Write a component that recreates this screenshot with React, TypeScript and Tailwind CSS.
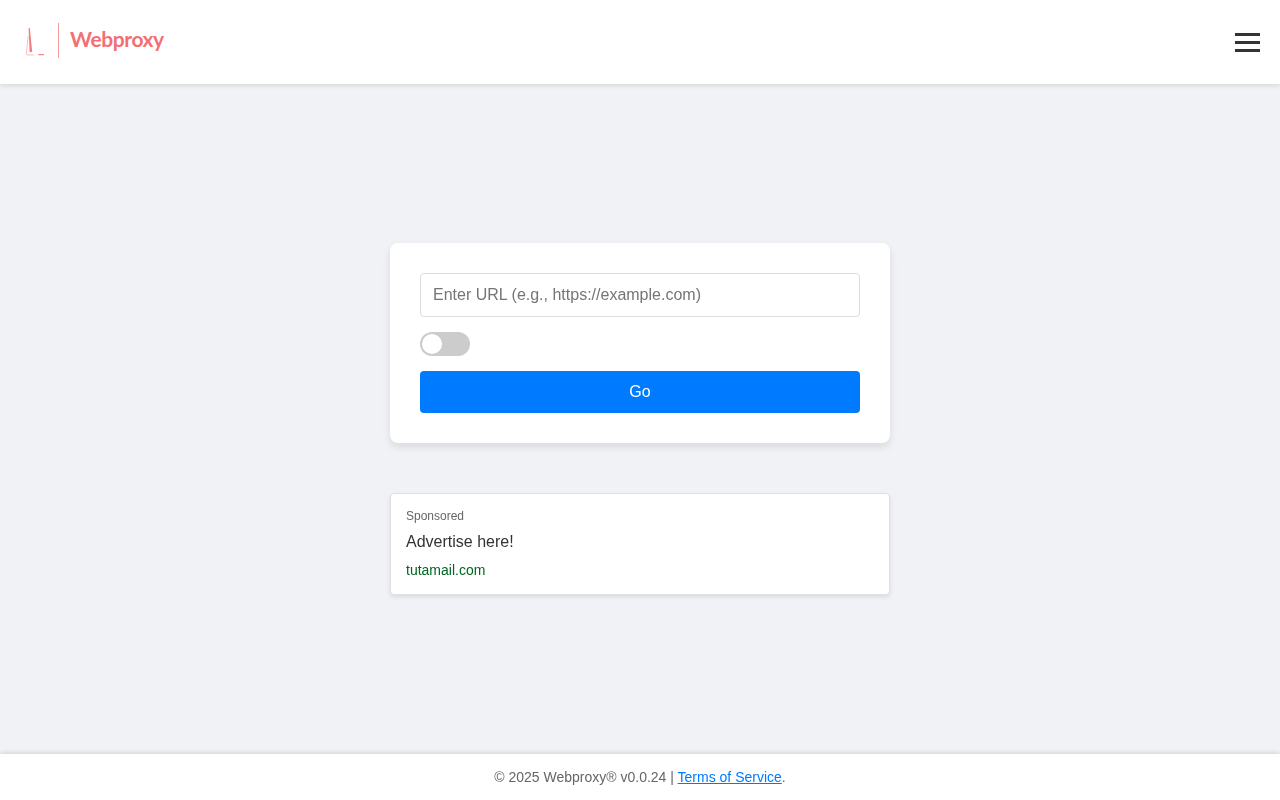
export default function App() {
  return (
    <div className="flex h-[800px] flex-col overflow-hidden bg-[#f0f2f5] font-['Liberation_Sans',Arial,sans-serif] text-[#333]">
      <header className="relative z-10 flex h-[84px] shrink-0 items-center justify-between bg-white pl-5 pr-5 shadow-[0_2px_4px_rgba(0,0,0,0.1)]">
        <div className="-mt-1 flex items-center">
          <svg width="26" height="36" viewBox="0 0 26 36" className="mr-3" fill="none">
            <path d="M8.6 6 L9.8 6 L12.2 30 L9.6 30 Z" fill="#f47c80" />
            <path d="M8.2 14 L6.3 32 L7 33 H14" stroke="#f9aeb0" strokeWidth="0.8" />
            <path d="M18.3 32.6 H24" stroke="#f4858a" strokeWidth="1.3" />
          </svg>
          <div className="mr-[11px] h-[35px] w-px bg-[#f59a9d]" />
          <span className="-mt-1 font-['Lato',sans-serif] text-[21px] font-bold leading-none tracking-[-0.4px] text-[#f26f73]">Webproxy</span>
        </div>
        <button className="flex w-[25px] flex-col gap-[5px]" aria-label="Menu">
          <span className="h-[3px] w-[25px] bg-[#333]" />
          <span className="h-[3px] w-[25px] bg-[#333]" />
          <span className="h-[3px] w-[25px] bg-[#333]" />
        </button>
      </header>

      <main className="flex flex-1 flex-col items-center justify-center gap-[50px]">
        <div className="flex w-[500px] flex-col rounded-lg bg-white p-[30px] shadow-[0_4px_8px_rgba(0,0,0,0.1)] will-change-transform">
          <input
            type="text"
            placeholder="Enter URL (e.g., https://example.com)"
            className="h-[44px] w-full rounded border border-[#ddd] px-3 text-base outline-none placeholder:text-[#757575]"
          />
          <div className="relative mt-[15px] h-6 w-[50px] rounded-full bg-[#ccc]">
            <div className="absolute left-[2px] top-[2px] h-5 w-5 rounded-full bg-white" />
          </div>
          <button className="mt-[15px] h-[42px] w-full rounded bg-[#007bff] text-base text-white">Go</button>
        </div>

        <div className="flex h-[102px] w-[500px] flex-col rounded border border-[#e0e0e0] bg-white px-[15px] pt-[15px] shadow-[0_2px_4px_rgba(0,0,0,0.1)] will-change-transform">
          <div className="text-xs leading-[14px] text-[#666]">Sponsored</div>
          <div className="mt-[7px] text-base leading-[24px] text-[#333]">Advertise here!</div>
          <div className="mt-2 text-sm leading-[16px] text-[#006621]">tutamail.com</div>
        </div>
      </main>

      <footer className="relative z-10 flex h-[46px] shrink-0 items-center justify-center bg-white text-sm text-[#666] shadow-[0_-2px_4px_rgba(0,0,0,0.1)] will-change-transform">
        <span>
          © 2025 Webproxy® v0.0.24 | <a href="#" className="text-[#007bff] underline">Terms of Service</a>.
        </span>
      </footer>
    </div>
  );
}
